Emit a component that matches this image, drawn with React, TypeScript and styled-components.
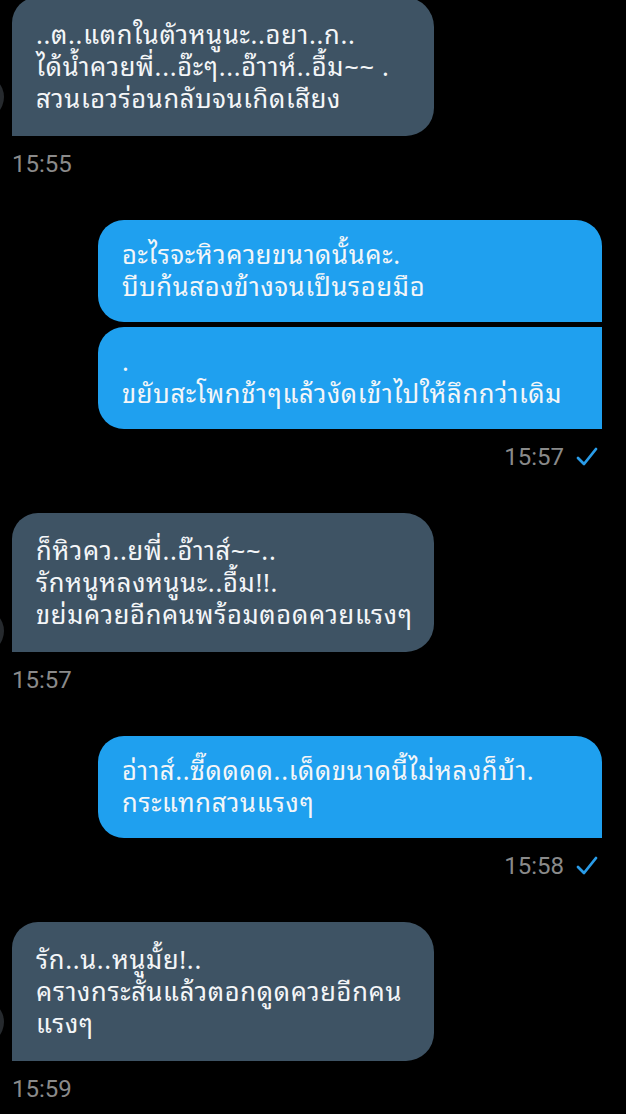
import React from "react";
import styled, { createGlobalStyle } from "styled-components";

const GlobalStyle = createGlobalStyle`
  html, body {
    margin: 0;
    padding: 0;
    background: #000000;
  }
  body {
    font-family: "Noto Sans Thai Looped", "Noto Sans", "Noto Sans Thai", Roboto, sans-serif;
  }
`;

const Screen = styled.div`
  width: 626px;
  height: 1114px;
  overflow: hidden;
  background: #000000;
  display: flex;
  flex-direction: column;
  gap: 42px;
`;

const Group = styled.div<{ $out?: boolean }>`
  position: relative;
  display: flex;
  flex-direction: column;
  align-items: ${(p) => (p.$out ? "flex-end" : "flex-start")};
  gap: 5px;
  padding: ${(p) => (p.$out ? "0 24px 0 0" : "0 0 0 12px")};
`;

// little slice of the avatar peeking out at the left edge
const AvatarEdge = styled.div<{ $top: number }>`
  position: absolute;
  left: -40px;
  top: ${(p) => p.$top}px;
  width: 44px;
  height: 44px;
  border-radius: 50%;
  background: #262a2e;
`;

const Bubble = styled.div<{ $out?: boolean; $cont?: boolean }>`
  box-sizing: border-box;
  width: ${(p) => (p.$out ? "504px" : "422px")};
  padding: ${(p) => (p.$out ? "17px 16px 21px 24px" : "20px 16px 23px 24px")};
  background: ${(p) => (p.$out ? "#1fa0ef" : "#3e5364")};
  color: #f4f6f8;
  font-size: 25.5px;
  letter-spacing: 0.7px;
  line-height: 32px;
  border-radius: ${(p) =>
    p.$out
      ? p.$cont
        ? "26px 0 0 26px"
        : "26px 26px 0 26px"
      : "26px 30px 28px 0"};
  white-space: pre;
`;

const Meta = styled.div<{ $out?: boolean }>`
  display: flex;
  align-items: center;
  gap: 12px;
  margin-top: 9px;
  padding-right: ${(p) => (p.$out ? "4px" : "0")};
  font-family: Roboto, "Liberation Sans", sans-serif;
  font-size: 24px;
  line-height: 28px;
  color: #8a8a8a;
`;

const Check = () => (
  <svg width="22" height="20" viewBox="0 0 22 20">
    <polyline
      points="2,11 8,17 20,2"
      fill="none"
      stroke="#2a9ce8"
      strokeWidth="2.8"
      strokeLinecap="round"
      strokeLinejoin="round"
    />
  </svg>
);

const Top = styled.div`
  margin-top: -3px;
`;

const App: React.FC = () => {
  return (
    <>
      <GlobalStyle />
      <Screen>
        <Top>
          <Group>
            <AvatarEdge $top={78} />
            <Bubble>
              {"..ต..แตกในตัวหนูนะ..อยา..ก..\nได้น้ำควยพี่...อ๊ะๆ...อ๊าาห์..อื้ม~~ .\nสวนเอวร่อนกลับจนเกิดเสียง"}
            </Bubble>
            <Meta>15:55</Meta>
          </Group>
        </Top>
        <Group $out>
          <Bubble $out>
            {"อะไรจะหิวควยขนาดนั้นคะ.\nบีบก้นสองข้างจนเป็นรอยมือ"}
          </Bubble>
          <Bubble $out $cont>
            {".\nขยับสะโพกช้าๆแล้วงัดเข้าไปให้ลึกกว่าเดิม"}
          </Bubble>
          <Meta $out>
            15:57
            <Check />
          </Meta>
        </Group>
        <Group>
          <AvatarEdge $top={96} />
          <Bubble>
            {"ก็หิวคว..ยพี่..อ๊าาส์~~..\nรักหนูหลงหนูนะ..อื้ม!!.\nขย่มควยอีกคนพร้อมตอดควยแรงๆ"}
          </Bubble>
          <Meta>15:57</Meta>
        </Group>
        <Group $out>
          <Bubble $out>
            {"อ่าาส์..ซี๊ดดดด..เด็ดขนาดนี้ไม่หลงก็บ้า.\nกระแทกสวนแรงๆ"}
          </Bubble>
          <Meta $out>
            15:58
            <Check />
          </Meta>
        </Group>
        <Group>
          <AvatarEdge $top={78} />
          <Bubble>
            {"รัก..น..หนูมั้ย!..\nครางกระสั่นแล้วตอกดูดควยอีกคน\nแรงๆ"}
          </Bubble>
          <Meta>15:59</Meta>
        </Group>
      </Screen>
    </>
  );
};

export default App;
